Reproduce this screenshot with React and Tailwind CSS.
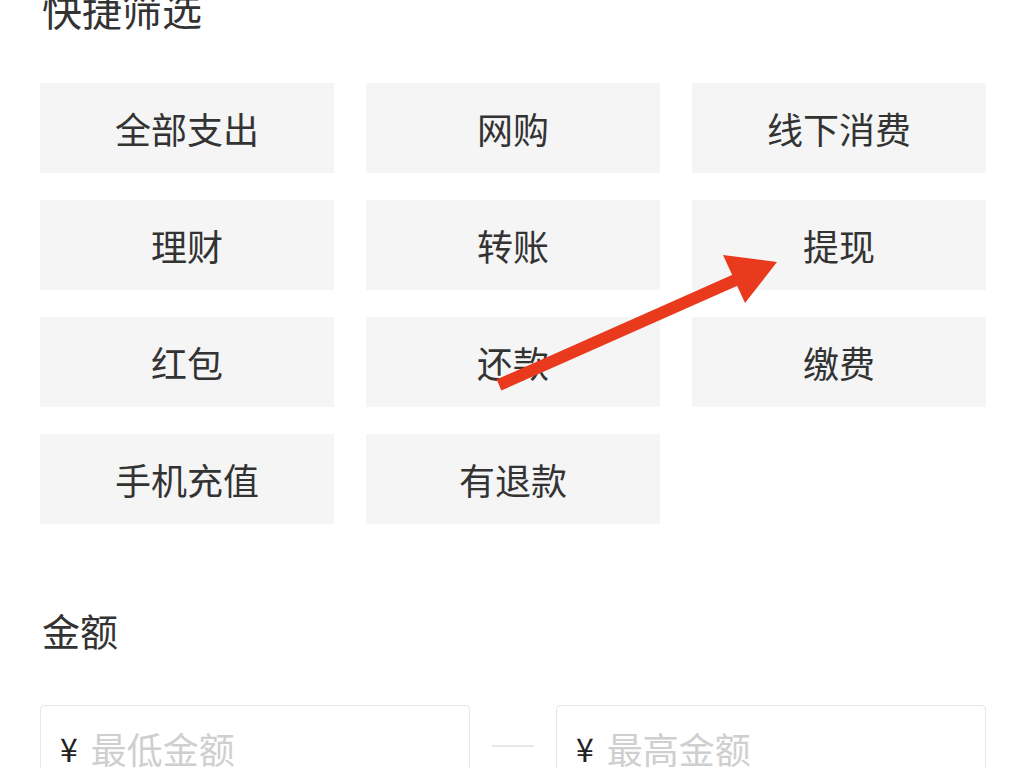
const tags = ["全部支出", "网购", "线下消费", "理财", "转账", "提现", "红包", "还款", "缴费", "手机充值", "有退款"]

function AmountInput({ placeholder }) {
  return (
    <div className="flex-1 h-[90px] border border-[#e6e6e6] rounded-[4px] flex items-start pt-[22px] pl-[19px] gap-[13px]">
      <span className="text-[32px] leading-[40px] text-[#222]">¥</span>
      <span className="text-[36px] leading-[40px] text-[#cfcfcf]">{placeholder}</span>
    </div>
  )
}

export default function App() {
  return (
    <div
      className="relative w-[1024px] h-[768px] overflow-hidden bg-white px-[40px]"
      style={{ fontFamily: '"Noto Sans CJK SC", "Noto Sans", sans-serif' }}
    >
      <h2 className="mt-[-15px] pl-[2px] text-[40px] leading-[48px] text-[#333] font-normal">快捷筛选</h2>

      <div className="mt-[50px] w-[946px] grid grid-cols-3 gap-x-[32px] gap-y-[27px]">
        {tags.map((t) => (
          <div key={t} className="h-[90px] bg-[#f5f5f5] flex items-center justify-center text-[36px] text-[#333]">
            {t}
          </div>
        ))}
      </div>

      <div className="mt-[82px] pl-[2px] text-[38px] leading-[48px] text-[#333]">金额</div>

      <div className="mt-[51px] w-[946px] flex items-start">
        <AmountInput placeholder="最低金额" />
        <div className="w-[86px] flex justify-center pt-[40px]">
          <div className="w-[42px] h-[2px] bg-[#e8e8e8]" />
        </div>
        <AmountInput placeholder="最高金额" />
      </div>

      <svg className="absolute left-0 top-0 pointer-events-none" width="1024" height="768" viewBox="0 0 1024 768">
        <line x1="499" y1="385" x2="740" y2="278" stroke="#ea3a1e" strokeWidth="12" strokeLinecap="butt" />
        <polygon points="777,262 723,255 745,303" fill="#ea3a1e" />
      </svg>
    </div>
  )
}
